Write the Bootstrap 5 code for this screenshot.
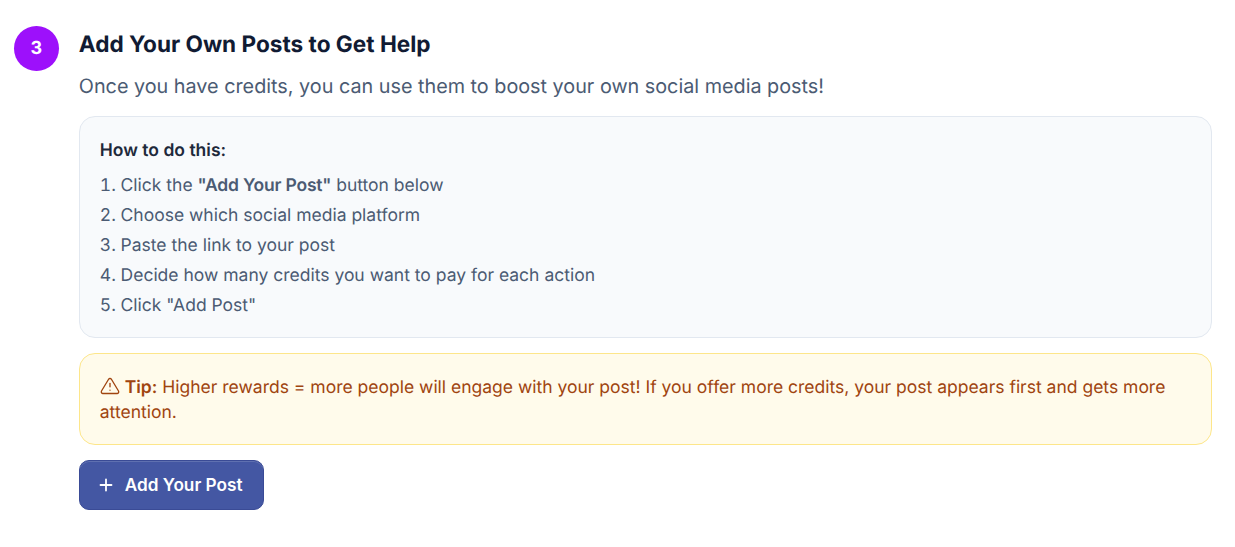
<!DOCTYPE html>
<html lang="en">
<head>
    <meta charset="UTF-8">
    <title>Add Your Own Posts</title>
    <link href="https://cdn.jsdelivr.net/npm/bootstrap@5.3.2/dist/css/bootstrap.min.css" rel="stylesheet">
    <style>
        body {
            font-family: "Inter", sans-serif;
            background-color: #ffffff;
            text-rendering: geometricPrecision;
        }
        .step-wrap {
            padding: 26px 23px 0 14px;
            gap: 20px;
        }
        .step-num {
            width: 44.8px;
            height: 44.8px;
            background-color: #9d10fb;
            font-size: 18px;
            font-weight: 700;
        }
        .step-title {
            font-size: 22.6px;
            font-weight: 700;
            line-height: 38px;
            color: #111b33;
            margin-top: 0;
            margin-bottom: 7px;
        }
        .step-desc {
            font-size: 19.8px;
            line-height: 30px;
            color: #4b5b73;
            margin-bottom: 15px;
        }
        .howto-box {
            background-color: #f8fafc;
            border: 1px solid #e2e8f0;
            border-radius: 16px;
            padding: 21px 20px 16px;
            margin-bottom: 15px;
        }
        .howto-title {
            font-size: 17.5px;
            font-weight: 600;
            line-height: 26px;
            color: #1e293b;
            margin-bottom: 7px;
        }
        .howto-list {
            font-size: 17.5px;
            line-height: 30px;
            color: #4b5b73;
            list-style-position: inside;
            padding-left: 0;
            margin-bottom: 0;
        }
        .howto-list strong {
            font-weight: 600;
            letter-spacing: -0.2px;
        }
        .tip-box {
            background-color: #fffbeb;
            border: 1px solid #fde68a;
            border-radius: 16px;
            padding: 21px 20px 19px;
            font-size: 17.5px;
            line-height: 25px;
            color: #a0440f;
            margin-bottom: 15px;
        }
        .tip-box strong {
            font-weight: 600;
        }
        .tip-icon {
            width: 20px;
            height: 20px;
            vertical-align: -3px;
        }
        .add-btn {
            background-color: #4457a3;
            border: 1px solid #3a4b96;
            border-radius: 10px;
            box-shadow: inset 0 1px 0 rgba(255, 255, 255, 0.15);
            color: #ffffff;
            font-size: 17.2px;
            font-weight: 600;
            height: 50px;
            padding: 0 21px 0 19px;
            gap: 12px;
        }
        .add-btn:hover {
            background-color: #3a4b96;
            color: #ffffff;
        }
    </style>
</head>
<body>

<div class="d-flex align-items-start step-wrap">
    <div class="step-num rounded-circle text-white d-flex align-items-center justify-content-center flex-shrink-0">3</div>
    <div class="flex-grow-1">
        <h3 class="step-title">Add Your Own Posts to Get Help</h3>
        <p class="step-desc">Once you have credits, you can use them to boost your own social media posts!</p>
        <div class="howto-box">
            <div class="howto-title">How to do this:</div>
            <ol class="howto-list">
                <li>Click the <strong>"Add Your Post"</strong> button below</li>
                <li>Choose which social media platform</li>
                <li>Paste the link to your post</li>
                <li>Decide how many credits you want to pay for each action</li>
                <li>Click "Add Post"</li>
            </ol>
        </div>
        <div class="tip-box">
            <svg class="tip-icon" viewBox="0 0 24 24" fill="none" stroke="currentColor" stroke-width="1.6" stroke-linecap="round" stroke-linejoin="round">
                <path d="M10.3 3.9 1.8 18a2 2 0 0 0 1.7 3h17a2 2 0 0 0 1.7-3L13.7 3.9a2 2 0 0 0-3.4 0z"/>
                <path d="M12 9v4"/>
                <path d="M12 17h.01"/>
            </svg>
            <strong>Tip:</strong> Higher rewards = more people will engage with your post! If you offer more credits, your post appears first and gets more attention.
        </div>
        <button type="button" class="btn add-btn d-inline-flex align-items-center">
            <svg width="14" height="14" viewBox="0 0 14 14" fill="none" stroke="currentColor" stroke-width="1.8" stroke-linecap="round">
                <path d="M7 1.5v11M1.5 7h11"/>
            </svg>
            Add Your Post
        </button>
    </div>
</div>

<script src="https://cdn.jsdelivr.net/npm/bootstrap@5.3.2/dist/js/bootstrap.bundle.min.js"></script>
</body>
</html>
